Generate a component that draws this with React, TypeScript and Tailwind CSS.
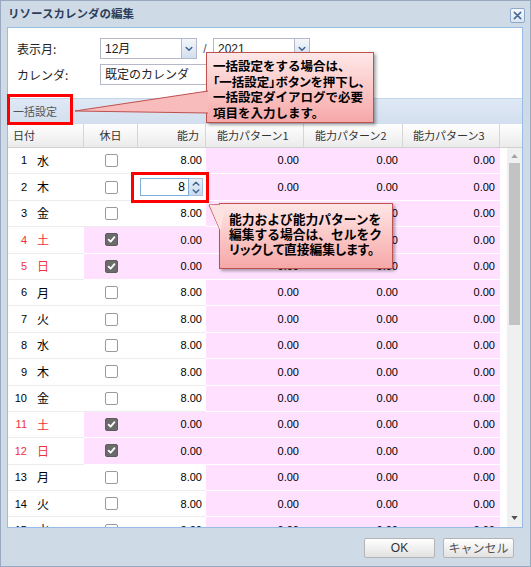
import React from 'react'

const FONT = '"Liberation Sans", "Noto Sans CJK JP", sans-serif'
const CJK = '"Noto Sans CJK JP", "Liberation Sans", sans-serif'

const days: [number, string][] = [
  [1, '水'], [2, '木'], [3, '金'], [4, '土'], [5, '日'], [6, '月'], [7, '火'], [8, '水'],
  [9, '木'], [10, '金'], [11, '土'], [12, '日'], [13, '月'], [14, '火'], [15, '水'],
]

function Chevron({ up = false, className = '' }: { up?: boolean; className?: string }) {
  return (
    <svg viewBox="0 0 10 6" className={className} fill="none" stroke="currentColor" strokeWidth={1.8} strokeLinecap="round" strokeLinejoin="round">
      {up ? <path d="M1.5 5L5 1.5 8.5 5" /> : <path d="M1.5 1L5 4.5 8.5 1" />}
    </svg>
  )
}

function Combo({ value, width }: { value: string; width: string }) {
  return (
    <div className={`${width} h-[21px] flex border border-[#b5b8c8] bg-white`}>
      <div className="flex-1 flex items-center pl-[4px] text-[12px] text-[#222] overflow-hidden whitespace-nowrap">{value}</div>
      <div className="w-[15px] flex items-center justify-center border-l border-[#b5b8c8] bg-gradient-to-b from-[#f4f7fb] to-[#d3dfed] text-[#3d5f8c]">
        <Chevron className="w-[8px] h-[6px]" />
      </div>
    </div>
  )
}

function Checkbox({ checked }: { checked: boolean }) {
  return checked ? (
    <div className="w-[13px] h-[13px] rounded-[2px] bg-[#6b6b6b] border border-[#5c5c5c] flex items-center justify-center">
      <svg viewBox="0 0 10 10" className="w-[9px] h-[9px]" fill="none" stroke="white" strokeWidth={2} strokeLinecap="round" strokeLinejoin="round">
        <path d="M1.8 5.2L4 7.4 8.3 2.4" />
      </svg>
    </div>
  ) : (
    <div className="w-[13px] h-[13px] rounded-[2px] bg-white border-[1.5px] border-[#9a9a9a]" />
  )
}

function Row({ d, w }: { d: number; w: string }) {
  const we = w === '土' || w === '日'
  const text = we ? 'text-[#f0313a]' : 'text-[#000]'
  const pinkCell = 'bg-[#ffe1ff] border-b border-white'
  const whiteCell = 'bg-white border-b border-[#ececec]'
  return (
    <div className="flex h-[26.4px] shrink-0 text-[11px]">
      <div className={`w-[76px] flex items-center ${whiteCell} ${text}`}>
        <span className="w-[19px] text-right">{d}</span>
        <span className="ml-[10px] text-[12px]" style={{ fontFamily: CJK }}>{w}</span>
      </div>
      <div className={`w-[54px] flex items-center justify-center ${we ? pinkCell : whiteCell}`}>
        <Checkbox checked={we} />
      </div>
      <div className={`w-[68px] flex items-center justify-end ${we ? pinkCell : whiteCell} ${d === 2 ? 'pr-[3px]' : 'pr-[4px]'} text-[#000]`}>
        {d === 2 ? (
          <div className="flex h-[18px] w-[63px]">
            <div className="flex-1 border border-[#7eadd9] bg-white flex items-center justify-end pr-[3px] text-[12px]">8</div>
            <div className="w-[14px] flex flex-col border border-l-0 border-[#a9c3e0] bg-gradient-to-b from-[#e9f0f8] to-[#c9d9ec] text-[#3b6796]">
              <div className="flex-1 flex items-center justify-center"><Chevron up className="w-[8px] h-[5px]" /></div>
              <div className="flex-1 flex items-center justify-center"><Chevron className="w-[8px] h-[5px]" /></div>
            </div>
          </div>
        ) : we ? '0.00' : '8.00'}
      </div>
      <div className={`w-[98px] flex items-center justify-end pr-[5px] ${pinkCell} text-[#000]`}>0.00</div>
      <div className={`w-[99px] flex items-center justify-end pr-[5px] ${pinkCell} text-[#000]`}>0.00</div>
      <div className={`w-[97px] flex items-center justify-end pr-[5px] ${pinkCell} text-[#000]`}>0.00</div>
    </div>
  )
}

export default function App() {
  return (
    <div className="w-[531px] h-[567px] relative bg-[#cfdae7] border border-[#97a8bf] flex flex-col overflow-hidden" style={{ fontFamily: FONT }}>
      {/* Title bar */}
      <div className="h-[26px] shrink-0 flex items-center justify-between pl-[7px] pr-[5px]">
        <span className="text-[11.5px] font-bold text-[#2c3f5a]" style={{ fontFamily: CJK }}>リソースカレンダの編集</span>
        <div className="w-[15px] h-[15px] mt-[3px] rounded-[2px] border border-[#8ea8c9] bg-gradient-to-b from-[#f5f8fc] to-[#dce6f2] flex items-center justify-center">
          <svg viewBox="0 0 10 10" className="w-[9px] h-[9px]" fill="none" stroke="#4b6c94" strokeWidth={1.8} strokeLinecap="round">
            <path d="M1.5 1.5l7 7M8.5 1.5l-7 7" />
          </svg>
        </div>
      </div>

      {/* Body */}
      <div className="ml-[6px] mr-[7px] h-[501px] shrink-0 flex flex-col border border-[#99bbe8] bg-white">
        {/* Form */}
        <div className="h-[70px] shrink-0 flex flex-col gap-[5px] pt-[10px] pl-[9px] text-[12px] text-[#222]">
          <div className="flex items-center">
            <span className="w-[83px]" style={{ fontFamily: CJK }}>表示月:</span>
            <Combo value="12月" width="w-[97px]" />
            <span className="w-[16px] text-center text-[#555]">/</span>
            <Combo value="2021" width="w-[97px]" />
          </div>
          <div className="flex items-center">
            <span className="w-[83px]" style={{ fontFamily: CJK }}>カレンダ:</span>
            <Combo value="既定のカレンダ" width="w-[210px]" />
          </div>
        </div>

        {/* Toolbar */}
        <div className="h-[26px] shrink-0 flex items-center pl-[5px] bg-gradient-to-b from-[#dfe8f5] to-[#d3dfee] border-t border-[#c5d5e9]">
          <span className="text-[11px] text-[#555]" style={{ fontFamily: CJK }}>一括設定</span>
        </div>

        {/* Grid header */}
        <div className="h-[24px] shrink-0 flex text-[11px] text-[#333] bg-gradient-to-b from-white to-[#ebebeb] border-b border-[#d0d0d0]" style={{ fontFamily: CJK }}>
          <div className="w-[76px] flex items-center pl-[5px] border-r border-[#d6d6d6]">日付</div>
          <div className="w-[54px] flex items-center justify-center border-r border-[#d6d6d6]">休日</div>
          <div className="w-[68px] flex items-center justify-end pr-[6px] border-r border-[#d6d6d6]">能力</div>
          <div className="w-[98px] flex items-center pl-[11px] border-r border-[#d6d6d6]">能力パターン1</div>
          <div className="w-[99px] flex items-center pl-[11px] border-r border-[#d6d6d6]">能力パターン2</div>
          <div className="w-[97px] flex items-center pl-[10px] border-r border-[#d6d6d6]">能力パターン3</div>
          <div className="flex-1" />
        </div>

        {/* Rows + scrollbar */}
        <div className="flex-1 flex overflow-hidden">
          <div className="w-[492px] flex flex-col overflow-hidden">
            {days.map(([d, w]) => (
              <Row key={d} d={d} w={w} />
            ))}
          </div>
          <div className="flex-1 flex bg-white">
            <div className="ml-[7px] flex-1 flex flex-col bg-[#f0f0f0]">
              <div className="h-[15px] flex items-center justify-center">
                <svg viewBox="0 0 8 5" className="w-[7px] h-[4px]"><path d="M0 5L4 0 8 5z" fill="#a3a3a3" /></svg>
              </div>
              <div className="ml-[2px] mr-[2px] h-[162px] bg-[#c3c3c3]" />
              <div className="flex-1" />
              <div className="h-[15px] flex items-center justify-center mb-[2px]">
                <svg viewBox="0 0 8 5" className="w-[7px] h-[4px]"><path d="M0 0L8 0 4 5z" fill="#505050" /></svg>
              </div>
            </div>
          </div>
        </div>
      </div>

      {/* Footer */}
      <div className="flex-1 flex justify-end items-start gap-[8px] pt-[10px] pr-[16px]">
        <div className="w-[71px] h-[20px] rounded-[2px] border border-[#b4b4b4] bg-gradient-to-b from-white to-[#e2e2e2] flex items-center justify-center text-[12px] text-[#333]">OK</div>
        <div className="w-[71px] h-[20px] rounded-[2px] border border-[#b4b4b4] bg-gradient-to-b from-white to-[#e2e2e2] flex items-center justify-center text-[12px] text-[#555]" style={{ fontFamily: CJK }}>キャンセル</div>
      </div>

      {/* Red highlight boxes */}
      <div className="absolute left-[6px] top-[93px] w-[66px] h-[31px] border-[3px] border-[#ff0000]" />
      <div className="absolute left-[130px] top-[171px] w-[78px] h-[31px] border-[3px] border-[#ff0000]" />

      {/* Callout 1 */}
      <div className="absolute left-[205px] top-[51px] w-[168px] h-[71px] border border-[#c0504d] bg-gradient-to-b from-[#fee8e8] to-[#f6a8a8] shadow-[2px_2px_3px_rgba(0,0,0,0.35)] pl-[6px] pt-[5px] text-[12.5px] font-bold leading-[15.5px] text-black whitespace-nowrap" style={{ fontFamily: CJK }}>
        <div>一括設定をする場合は、</div>
        <div className="[font-feature-settings:'palt']">「一括設定」ボタンを押下し、</div>
        <div>一括設定ダイアログで必要</div>
        <div>項目を入力します。</div>
      </div>
      <svg className="absolute left-0 top-0 w-[531px] h-[567px] pointer-events-none" viewBox="0 0 531 567">
        <polygon points="74,110 207,90 207,112" fill="#f8bcbc" />
        <polyline points="207,90 74,110 207,112" fill="none" stroke="#c0504d" strokeWidth={1} />
        <polygon points="208,204 224,203 219.5,230" fill="#fde0e0" />
        <polyline points="224,203 208,204 219.5,230" fill="none" stroke="#c0504d" strokeWidth={1} />
      </svg>

      {/* Callout 2 */}
      <div className="absolute left-[218px] top-[202px] w-[174px] h-[66px] border border-[#c0504d] bg-gradient-to-b from-[#fee6e6] to-[#f6a8a8] shadow-[2px_2px_3px_rgba(0,0,0,0.35)] pl-[9px] pt-[7px] text-[12.75px] font-bold leading-[15px] text-black whitespace-nowrap" style={{ fontFamily: CJK }}>
        <div>能力および能力パターンを</div>
        <div>編集する場合は、セルをク</div>
        <div className="[font-feature-settings:'palt']">リックして直接編集します。</div>
      </div>
      <svg className="absolute left-0 top-0 w-[531px] h-[567px] pointer-events-none" viewBox="0 0 531 567">
        <polygon points="208.5,204 224,203.5 219.5,230" fill="#fde2e2" />
      </svg>
    </div>
  )
}
